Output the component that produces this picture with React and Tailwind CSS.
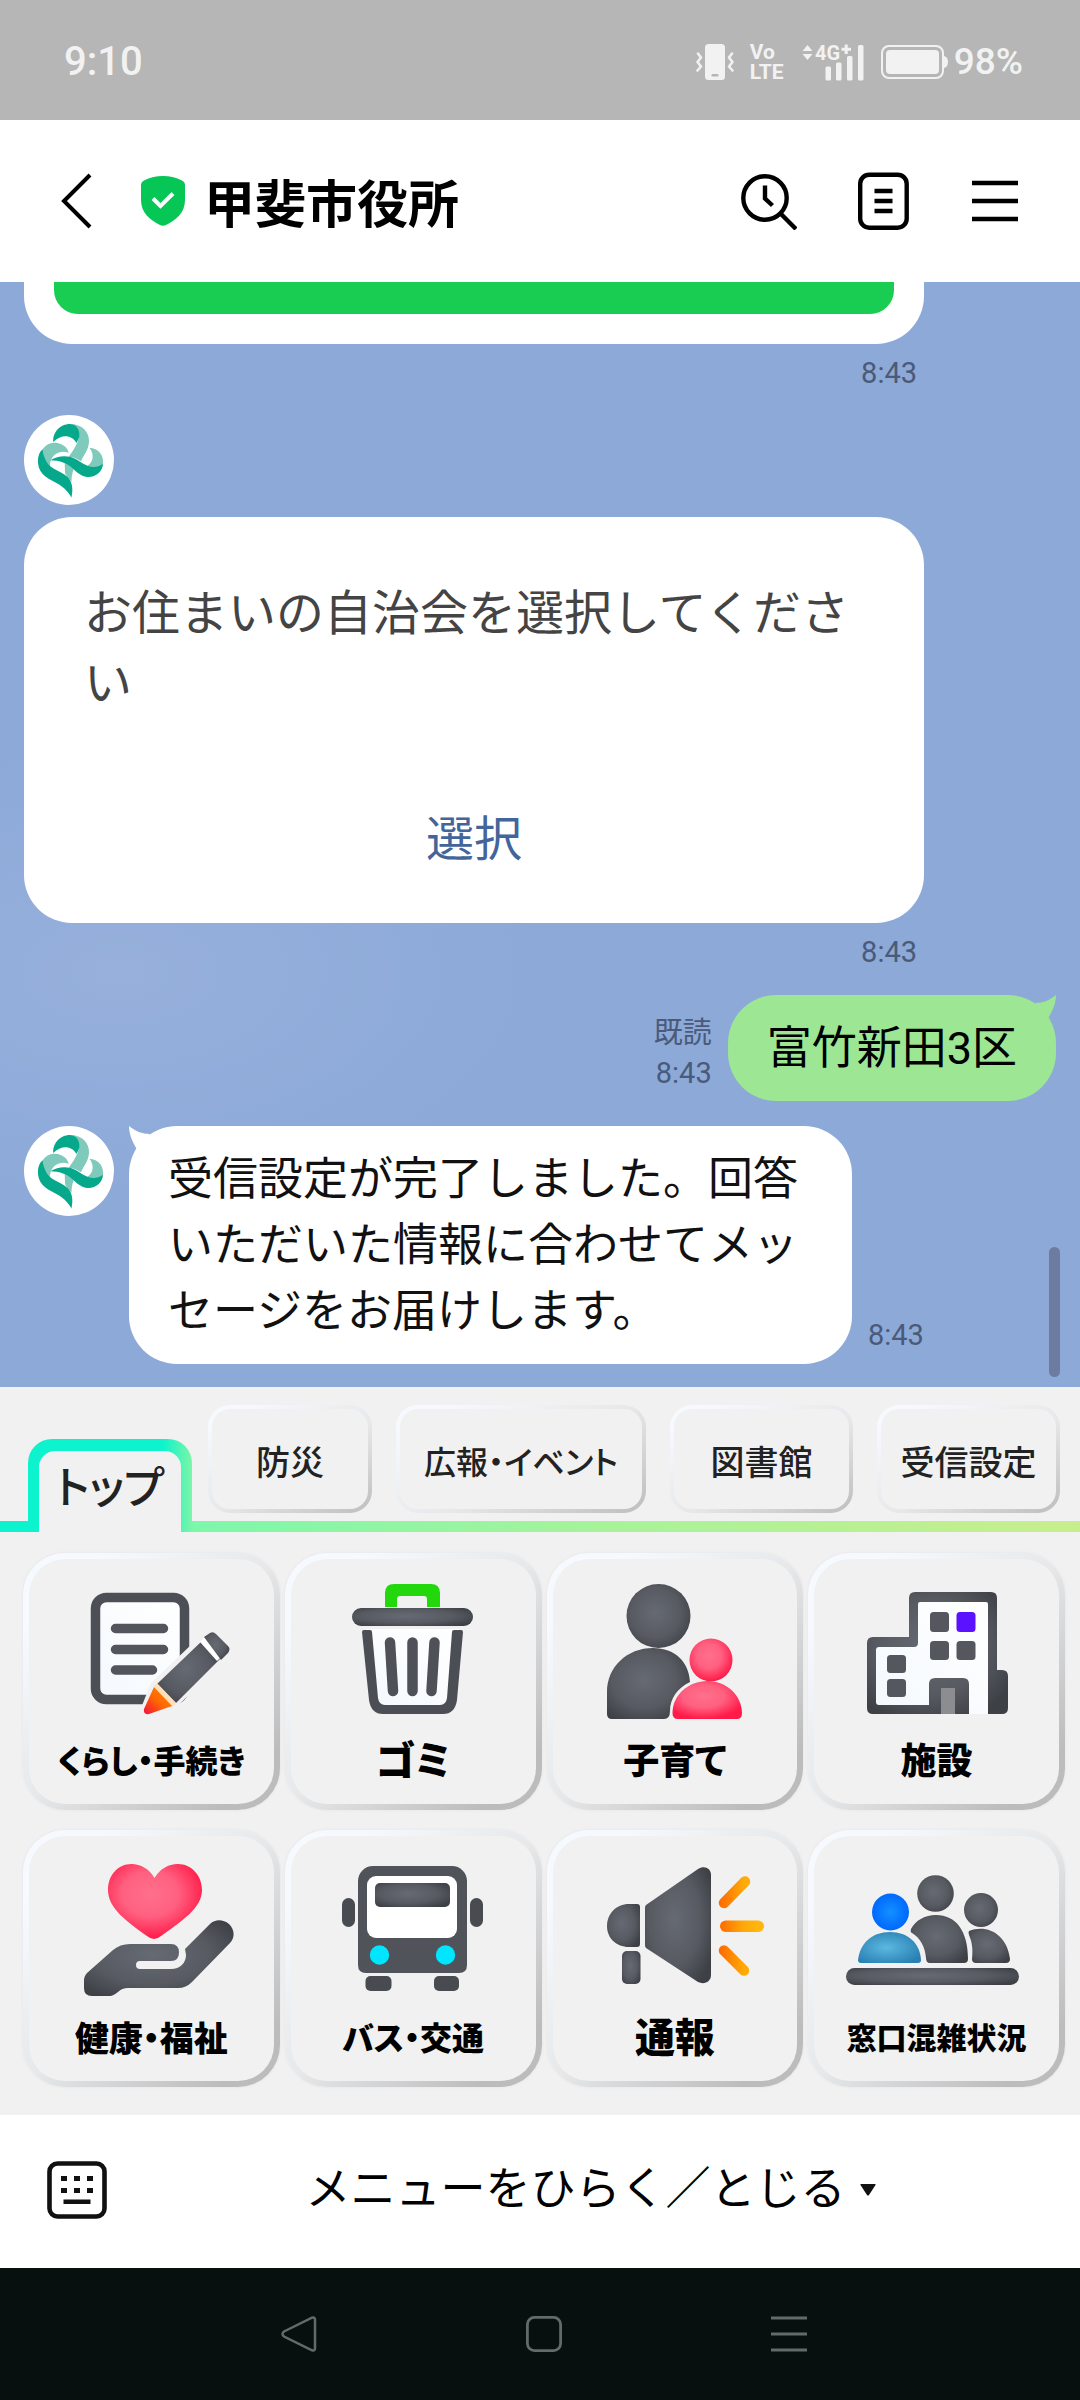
import React from "react";

function StatusBar() {
  return (
    <div className="flex h-[120px] items-center justify-between bg-[#b6b6b6] pt-1 pr-[57px] pl-[64px] text-[#f2f2f2]">
      <span className="text-[40px] font-medium">9:10</span>
      <div className="flex items-center">
        <svg width="38" height="36" viewBox="0 0 38 36" fill="none" aria-label="バイブレーション">
          <rect x="9" width="20" height="36" rx="3.500" fill="#f2f2f2" />
          <rect x="15.500" y="30" width="7" height="2.500" rx="1.200" fill="#b6b6b6" />
          <path d="M2 9.500l3 4-3.500 4.500 3.500 4.500-3.500 4M36 9.500l-3 4 3.500 4.500-3.500 4.500 3.500 4" stroke="#f2f2f2" strokeWidth="2.600" strokeLinecap="round" strokeLinejoin="round" />
        </svg>
        <span className="ml-4 text-[21px] leading-5 font-bold">
          Vo
          <br />
          LTE
        </span>
        <svg className="ml-[18px]" width="62" height="50" viewBox="0 -6 62 50" fill="#f2f2f2" aria-label="4G+">
          <path d="M5.500 2l5 6H.5zM5.500 17l5-6H.5z" />
          <text x="13" y="17" fontSize="20" fontWeight="700">4G</text>
          <path d="M39.500 4.700h3.200V1.500h3v3.200H49v3h-3.300V11h-3V7.700h-3.200z" />
          <rect x="23.500" y="23.500" width="5.500" height="14" rx="1.500" />
          <rect x="34" y="19.500" width="5.500" height="18" rx="1.500" />
          <rect x="45" y="13" width="5.500" height="24.500" rx="1.500" />
          <rect x="56" y="2" width="5.500" height="35.500" rx="1.500" />
        </svg>
        <svg className="ml-[17px]" width="67" height="34" viewBox="0 0 67 34" fill="none" aria-label="電池">
          <rect x="1" y="1" width="61" height="32" rx="7" stroke="#f2f2f2" strokeWidth="2" />
          <rect x="5" y="5" width="53" height="24" rx="4" fill="#f2f2f2" />
          <path d="M63 11q4 1 4 6t-4 6z" fill="#f2f2f2" />
        </svg>
        <span className="ml-1.5 text-[37px] leading-10 font-medium">98%</span>
      </div>
    </div>
  );
}

function Header() {
  return (
    <header className="flex h-[162px] items-center justify-between bg-white pr-[60px] pl-[60px] text-black">
      <div className="flex items-center">
        <button type="button" aria-label="戻る">
          <svg width="33" height="56" viewBox="0 0 33 56" fill="none" stroke="currentColor" strokeWidth="4">
            <path d="M30 2L4 28l26 26" />
          </svg>
        </button>
        <svg className="ml-12" width="44" height="50" viewBox="0 0 44 50" fill="none">
          <path d="M4 4Q12 0 22 0t18 4q4 1.500 4 5v15c0 13-9 20-19 25q-3 1.500-6 0C9 44 0 37 0 24V9q0-3.500 4-5z" fill="#06c755" />
          <path d="M12 22.500l7.500 7.500L32 17.500" stroke="#fff" strokeWidth="4" />
        </svg>
        <h1 className="ml-[19px] pt-2.5 text-[51px] leading-[60px] font-bold">甲斐市役所</h1>
      </div>
      <div className="flex items-center gap-[61px]">
        <button type="button" aria-label="検索">
          <svg width="56" height="58" viewBox="0 0 56 58" fill="none" stroke="currentColor" strokeWidth="4.400">
            <circle cx="24" cy="26" r="21.700" />
            <path d="M24 13.500v13l7.500 7M39.500 41.500L55 57" />
          </svg>
        </button>
        <button type="button" aria-label="ノート">
          <svg width="51" height="58" viewBox="0 0 51 58" fill="none" stroke="currentColor" strokeWidth="4.400">
            <rect x="2.200" y="2.700" width="46.500" height="53" rx="9" />
            <path d="M16.500 19h18M16.500 29h18M16.500 39h18" />
          </svg>
        </button>
        <button type="button" aria-label="メニュー">
          <svg width="50" height="42" viewBox="0 0 50 42" fill="none" stroke="currentColor" strokeWidth="4.400">
            <path d="M2 3h46M2 21h46M2 39h46" />
          </svg>
        </button>
      </div>
    </header>
  );
}

function Avatar() {
  return (
    <svg className="h-[90px] w-[90px] shrink-0" viewBox="12 45 270 270" role="img" aria-label="甲斐市">
      <circle cx="147" cy="180" r="135" fill="#fff" />
      <g fill="#7fcabb">
        <path d="M150 72c36 0 59 24 57 54-2 26-16 38-24 58-10-7-22-13-37-14 10-14 20-28 27-45 8-22 3-43-23-53z" />
        <path d="M66 152c12-24 38-28 56-20 14 6 21 14 24 26-26-9-46 4-54 24-4 12-2 22 4 32-24-8-40-32-30-62z" />
        <path d="M208 143c27 2 44 22 41 48-10 14-30 14-46 6 18-12 20-36 5-54z" />
        <path d="M134 186c10 2 20 12 27 22-5 14-7 24-6 38-8-12-19-18-20-30z" />
      </g>
      <g fill="#05a88b">
        <path d="M100 126c-3-28 20-54 50-54 20 2 30 18 28 37-2 8-5 14-9 20-14-26-46-26-69-3z" />
        <path d="M68 148c-18 14-20 52 0 74 22 22 44 24 66 44 10 10 17 18 20 27 6-24 4-48-12-63-20-18-48-20-62-44-8-14-12-26-12-38z" />
        <path d="M91 181c26-16 56-15 80-2 22 14 48 34 78 12-1 26-26 44-52 39-28-6-40-34-66-42-14-5-27-7-40-7z" />
      </g>
    </svg>
  );
}

function Time({ className = "" }) {
  return <time className={"block text-[29px] leading-[34px] text-[#4a5a78] " + className}>8:43</time>;
}

function Chat() {
  return (
    <main className="relative overflow-hidden bg-[#8ca9d8] bg-[radial-gradient(ellipse_420px_230px_at_120px_690px,#97b0dc,#8ca9d8)] px-6 pb-[23px]">
      <div className="mr-[132px]">
        <div className="rounded-b-[48px] bg-white px-[30px] pb-[30px]">
          <div className="h-8 rounded-b-3xl bg-[#19cc52]" />
        </div>
        <Time className="mt-3 pr-[7px] text-right" />
      </div>

      <div className="mt-[25px]">
        <Avatar />
      </div>
      <div className="mt-3 mr-[132px]">
        <div className="flex flex-col rounded-[48px] bg-white px-[60px] pt-[62px] pb-12 text-[48px] leading-[70px]">
          <p className="text-[#444444]">お住まいの自治会を選択してください</p>
          <button type="button" className="mt-[86px] text-[#42659a]">
            選択
          </button>
        </div>
        <Time className="mt-3 pr-[7px] text-right" />
      </div>

      <div className="mt-[26px] flex items-end justify-end gap-4">
        <div className="mb-2 text-right text-[29px] leading-10 text-[#4a5a78]">
          <div>既読</div>
          <time>8:43</time>
        </div>
        <div className="relative rounded-[48px] bg-[#9de693] px-[39px] pt-[21px] pb-[19px] text-[45px] leading-[66px] text-black">
          富竹新田3区
          <svg className="absolute top-0 right-0" width="24" height="26" viewBox="0 0 24 26" fill="#9de693">
            <path d="M24 0C18 5 11 8 3 8l12 17c5-8 9-16 9-25z" />
          </svg>
        </div>
      </div>

      <div className="mt-[25px] flex items-start gap-[15px]">
        <Avatar />
        <div className="flex items-end gap-4">
          <div className="relative max-w-[723px] rounded-[48px] bg-white pt-[21px] pr-[53px] pb-[19px] pl-[39px] text-[45px] leading-[66px] text-[#111111]">
            受信設定が完了しました。回答いただいた情報に合わせてメッセージをお届けします。
            <svg className="absolute top-0 left-0" width="24" height="26" viewBox="0 0 24 26" fill="#fff">
              <path d="M0 0c6 5 13 8 21 8L9 25C4 17 0 9 0 0z" />
            </svg>
          </div>
          <Time className="mb-3" />
        </div>
      </div>
      <div className="absolute right-5 bottom-[10px] h-[130px] w-[11px] rounded-full bg-[#6c7b9e]" />
    </main>
  );
}

const TABS = [
  { label: "防災", size: "text-[34px]" },
  { label: "広報・イベント", size: "text-[32px]" },
  { label: "図書館", size: "text-[34px]" },
  { label: "受信設定", size: "text-[34px]" },
];

function Tabs() {
  return (
    <nav className="grid grid-cols-[156fr_164fr_250fr_183fr_183fr] gap-x-6 bg-[linear-gradient(90deg,#0cf3cd_0%,#0cf3cd_14%,#7df7ab_18%,#a6f39a_55%,#c8ee8c_100%)] bg-[length:100%_11px] bg-bottom bg-no-repeat pt-[18px] pr-5 pl-7 text-[#222222]">
      <button
        type="button"
        className="-mr-2 flex self-end rounded-t-3xl bg-[linear-gradient(90deg,#0cf3cd_82%,#7df5a8_100%)] px-[11px] pt-3 text-[44px] font-medium"
      >
        <span className="grow rounded-t-2xl bg-[#f1f1f1] pt-1.5 pb-2.5 text-center leading-[65px] [font-feature-settings:'palt']">トップ</span>
      </button>
      {TABS.map((t) => (
        <button
          key={t.label}
          type="button"
          className="mb-[19px] flex h-[108px] rounded-[22px] bg-[linear-gradient(150deg,#f6faff_10%,#e6e8ea_55%,#c2c2c4_95%)] p-1 font-medium"
        >
          <span className={"flex h-full grow items-center justify-center rounded-[18px] bg-[#f1f1f1] pt-2 leading-none whitespace-nowrap [font-feature-settings:'palt'] " + t.size}>
            {t.label}
          </span>
        </button>
      ))}
    </nav>
  );
}

function Defs() {
  return (
    <svg className="absolute h-0 w-0" aria-hidden="true">
      <defs>
        <radialGradient id="dark" cx="45%" cy="45%" r="65%">
          <stop offset="0" stopColor="#666a73" />
          <stop offset="0.600" stopColor="#575a61" />
          <stop offset="1" stopColor="#3d4045" />
        </radialGradient>
        <radialGradient id="pink" cx="45%" cy="40%" r="60%">
          <stop offset="0" stopColor="#ff708c" />
          <stop offset="0.500" stopColor="#ff6080" />
          <stop offset="1" stopColor="#ff1a48" />
        </radialGradient>
        <radialGradient id="blueHead">
          <stop offset="0" stopColor="#1490ff" />
          <stop offset="1" stopColor="#0068ff" />
        </radialGradient>
        <radialGradient id="blueBody" cx="45%" cy="50%" r="60%">
          <stop offset="0" stopColor="#5cb8e0" />
          <stop offset="1" stopColor="#2a80b4" />
        </radialGradient>
        <linearGradient id="paper" x1="0" y1="1" x2="1" y2="0">
          <stop offset="0" stopColor="#f4f9fe" />
          <stop offset="1" stopColor="#ffffff" />
        </linearGradient>
        <linearGradient id="ray" gradientUnits="userSpaceOnUse" x1="168" y1="0" x2="206" y2="0">
          <stop offset="0" stopColor="#ff6a00" />
          <stop offset="0.600" stopColor="#ffa808" />
          <stop offset="1" stopColor="#ffb70d" />
        </linearGradient>
        <linearGradient id="tip" x1="0" y1="1" x2="1" y2="0">
          <stop offset="0" stopColor="#f5103c" />
          <stop offset="0.500" stopColor="#ff6a00" />
          <stop offset="1" stopColor="#ff8410" />
        </linearGradient>
      </defs>
    </svg>
  );
}

const icons = {
  document: (
    <>
      <rect x="66.500" y="38.500" width="89" height="102" rx="11" fill="url(#paper)" stroke="#4c4f55" strokeWidth="9.500" />
      <path d="M86.500 69.500h48M86.500 90.500h48M86.500 111h37" stroke="#52555c" strokeWidth="9.500" strokeLinecap="round" />
      <path d="M112 158l-2-4 12-30 60-57 26 24-64 60z" fill="#f1f1f1" />
      <path d="M128 125l46-44 17 19-44 44z" fill="url(#dark)" />
      <path d="M171 83l6-6 17 19-6 6z" fill="#fff" />
      <path d="M175 78l6-4q3-2 6 1l12 12q3 3 0 7l-7 7z" fill="url(#dark)" />
      <path d="M125 127l3-3 19 20-4 4z" fill="#ffdfb8" />
      <path d="M125 128l18 19-23 8q-6 1-5-5z" fill="url(#tip)" />
    </>
  ),
  trash: (
    <>
      <path d="M94 48V34q0-9 9-9h37q9 0 9 9v14h-13V40q0-3-3-3h-24q-3 0-3 3v8z" fill="#22d80c" />
      <path d="M75 70h93l-8 80H83z" fill="url(#paper)" />
      <path d="M71 73q0-2 2-2h6q2 0 2 2l6 66q1 7 7 7h55q6 0 7-7l5-66q0-2 2-2h7q2 0 2 2l-6 68q-2 14-14 14H92q-12 0-14-14z" fill="#4b4e54" />
      <path d="M99 83.500l3 48.500M121.500 83.500V132M143.500 83.500l-3 48.500" stroke="#4e5157" strokeWidth="10.500" strokeLinecap="round" />
      <rect x="61" y="49" width="121" height="18" rx="9" fill="url(#dark)" />
    </>
  ),
  family: (
    <>
      <circle cx="106.500" cy="57" r="32" fill="url(#dark)" />
      <path d="M55 133c0-25 20-44 46-44 22 0 36 14 37 34-13 6-20 17-20 29q0 8-6 8H60q-5 0-5-5z" fill="url(#dark)" />
      <circle cx="159" cy="101" r="21.500" fill="url(#pink)" />
      <path d="M120.500 154c0-18 16-32 35-32s34 14 34.500 32q0 6-5 6h-59q-5.500 0-5.500-6z" fill="url(#pink)" />
    </>
  ),
  building: (
    <>
      <path d="M53 84q0-6 6-6h36V39q0-6 6-6h76q6 0 6 6v72h5q6 0 6 6v32q0 6-6 6H59q-6 0-6-6z" fill="url(#dark)" />
      <path d="M62 91q0-3 3-3h35q4 0 4-4V45q0-2 2-2h66q2 0 2 2v110h-19v-30q0-6-6-6h-28q-6 0-6 6v21H65q-3 0-3-3z" fill="url(#paper)" />
      <rect x="127" y="129" width="14" height="26" fill="#8b8d91" />
      <g fill="#54575d">
        <rect x="116" y="53" width="19" height="20" rx="3.500" />
        <rect x="116" y="82" width="19" height="19" rx="3.500" />
        <rect x="142.500" y="82" width="19" height="19" rx="3.500" />
        <rect x="73" y="96" width="19" height="18" rx="3.500" />
        <rect x="73" y="120" width="19" height="18" rx="3.500" />
      </g>
      <rect x="142.500" y="53" width="19" height="20" rx="3.500" fill="#5a12ff" />
    </>
  ),
  care: (
    <>
      <path d="M125.500 42c-5-9-14-14-23-14C89 28 79 39 79 54c0 18 18 31 39 46q7 6 14 0c21-15 41-28 41-46 0-15-11-26-24-26-10 0-18 5-23.500 14z" fill="url(#pink)" />
      <path d="M58 137l26-23q7-6 17-6h41q8 0 8 8.500t-8 8.500h-31q-4 0-4 4t4 4h31c9 0 15-6 15-14l-1-6 25-25c5-5 13-5 19 0 6 6 6 14 1 19l-38 39q-6 6-14 6H99q-6 0-10 4-5 4-8 4H63q-8 0-8-8v-7q0-5 3-8z" fill="url(#dark)" />
    </>
  ),
  bus: (
    <>
      <rect x="67" y="30" width="109" height="107" rx="15" fill="#505359" />
      <path d="M67 110h109v19q0 8-8 8H75q-8 0-8-8z" fill="#505359" />
      <rect x="76" y="40" width="90" height="62" rx="9" fill="#fff" />
      <rect x="84" y="47" width="75" height="24" rx="5" fill="url(#dark)" />
      <rect x="51" y="62" width="13" height="29" rx="6.500" fill="#484b50" />
      <rect x="179" y="62" width="13" height="29" rx="6.500" fill="#484b50" />
      <circle cx="88.500" cy="119" r="9.700" fill="#00e6ff" />
      <circle cx="154.500" cy="119" r="9.700" fill="#00e6ff" />
      <rect x="74.500" y="140" width="26" height="15" rx="5" fill="#484b50" />
      <rect x="143" y="140" width="25" height="15" rx="5" fill="#484b50" />
    </>
  ),
  megaphone: (
    <>
      <path d="M77 68h8q3 0 3 3v37q0 3-3 3h-8C64 111 55 102 55 90s9-22 22-22z" fill="url(#dark)" />
      <rect x="70" y="115" width="18.500" height="33" rx="5" fill="url(#dark)" />
      <path d="M94 69l52-36c6-4 13-1 13 6v100c0 7-7 10-13 7l-52-34q-1-1-1-3V72q0-2 1-3z" fill="url(#dark)" />
      <path d="M172 67l21-21.500M172 114.500l20 20" stroke="url(#ray)" strokeWidth="10.500" strokeLinecap="round" />
      <rect x="168" y="84.500" width="44" height="11.500" rx="5.700" fill="url(#ray)" />
    </>
  ),
  counter: (
    <>
      <circle cx="76.500" cy="76" r="18.500" fill="url(#blueHead)" />
      <path d="M44 124c2-17 14-28 32-28s30 11 31 28q0 3-3 3H47q-3 0-3-3z" fill="url(#blueBody)" />
      <circle cx="121.500" cy="57.500" r="18.300" fill="url(#dark)" />
      <path d="M97 93c5-9 14-14 25-14 20 0 32 16 32 44q0 4-4 4h-34q-4 0-4-5c-1-12-6-20-14-25q-2-1-1-4z" fill="url(#dark)" />
      <circle cx="167" cy="74" r="17" fill="url(#dark)" />
      <path d="M155 95c18-7 38 3 41 28q0 4-4 4h-30q-4 0-4-4c1-10 0-17-3-24q-1-3 0-4z" fill="url(#dark)" />
      <rect x="32" y="132" width="173" height="17" rx="8.500" fill="url(#dark)" />
    </>
  ),
};

const TILES = [
  { icon: "document", label: "くらし・手続き", size: "text-[32px]" },
  { icon: "trash", label: "ゴミ", size: "text-[40px]" },
  { icon: "family", label: "子育て", size: "text-[36px]" },
  { icon: "building", label: "施設", size: "text-[36px]" },
  { icon: "care", label: "健康・福祉", size: "text-[34px]" },
  { icon: "bus", label: "バス・交通", size: "text-[32px]" },
  { icon: "megaphone", label: "通報", size: "text-[40px]" },
  { icon: "counter", label: "窓口混雑状況", size: "text-[30px]" },
];

function RichMenu() {
  return (
    <section className="bg-[#f1f1f1]">
      <Defs />
      <Tabs />
      <div className="grid grid-cols-4 gap-x-[5px] gap-y-5 pt-[21px] pr-[15px] pb-7 pl-[23px]">
        {TILES.map((t) => (
          <button
            key={t.label}
            type="button"
            className="rounded-[42px] bg-[linear-gradient(135deg,#f6faff_15%,#e6e8ea_50%,#bcbcbd_88%)] p-1.5 shadow-[0_0_3px_#e2e2e2]"
          >
            <span className="flex flex-col items-center rounded-[36px] bg-[#f1f1f1]">
              <svg className="h-[165px] w-[245px]" viewBox="0 0 245 165" fill="none" aria-hidden="true">
                {icons[t.icon]}
              </svg>
              <span className={"pb-1 leading-[76px] font-black whitespace-nowrap text-black [font-feature-settings:'palt'] " + t.size}>{t.label}</span>
            </span>
          </button>
        ))}
      </div>
    </section>
  );
}

function MenuBar() {
  return (
    <footer className="flex h-[153px] items-center bg-white pb-1 pl-[47px] text-black">
      <button type="button" aria-label="キーボード">
        <svg width="60" height="58" viewBox="0 0 60 58" fill="#111">
          <rect x="2.500" y="2.500" width="55" height="53" rx="8" fill="none" stroke="#111" strokeWidth="4.600" />
          <path d="M14 15h6v5h-6zM27 15h6v5h-6zM40 15h6v5h-6zM14 27h6v5h-6zM27 27h6v5h-6zM40 27h6v5h-6zM16.500 38.500h27v4.500h-27z" />
        </svg>
      </button>
      <button type="button" className="flex grow items-center justify-center gap-3.5 pr-1.5 text-[45px] leading-[66px]">
        メニューをひらく／とじる
        <svg width="16" height="12" viewBox="0 0 16 12" fill="#111">
          <path d="M1 0h14q1 0 .5 1L9 11q-1 1-2 0L.5 1Q0 0 1 0z" />
        </svg>
      </button>
    </footer>
  );
}

function SystemNav() {
  return (
    <div className="flex h-[132px] items-center justify-center gap-[209px] bg-[#07100e] pl-[7px] text-[#646a68]">
      <button type="button" aria-label="戻る">
        <svg width="36" height="36" viewBox="0 0 36 36" fill="none" stroke="currentColor" strokeWidth="2.500">
          <path d="M3 15.500L31 1.700q3-1 3 2v28.600q0 3-3 2L3 20.500q-3-2.500 0-5z" />
        </svg>
      </button>
      <button type="button" aria-label="ホーム">
        <svg width="36" height="36" viewBox="0 0 36 36" fill="none" stroke="currentColor" strokeWidth="2.800">
          <rect x="1.400" y="1.400" width="33.200" height="33.200" rx="7" />
        </svg>
      </button>
      <button type="button" aria-label="履歴">
        <svg width="36" height="36" viewBox="0 0 36 36" fill="none" stroke="currentColor" strokeWidth="3">
          <path d="M0 2h36M0 18h36M0 34h36" />
        </svg>
      </button>
    </div>
  );
}

export default function App() {
  return (
    <div className="font-[Roboto,'Noto_Sans_CJK_JP',sans-serif]" lang="ja">
      <StatusBar />
      <Header />
      <Chat />
      <RichMenu />
      <MenuBar />
      <SystemNav />
    </div>
  );
}
